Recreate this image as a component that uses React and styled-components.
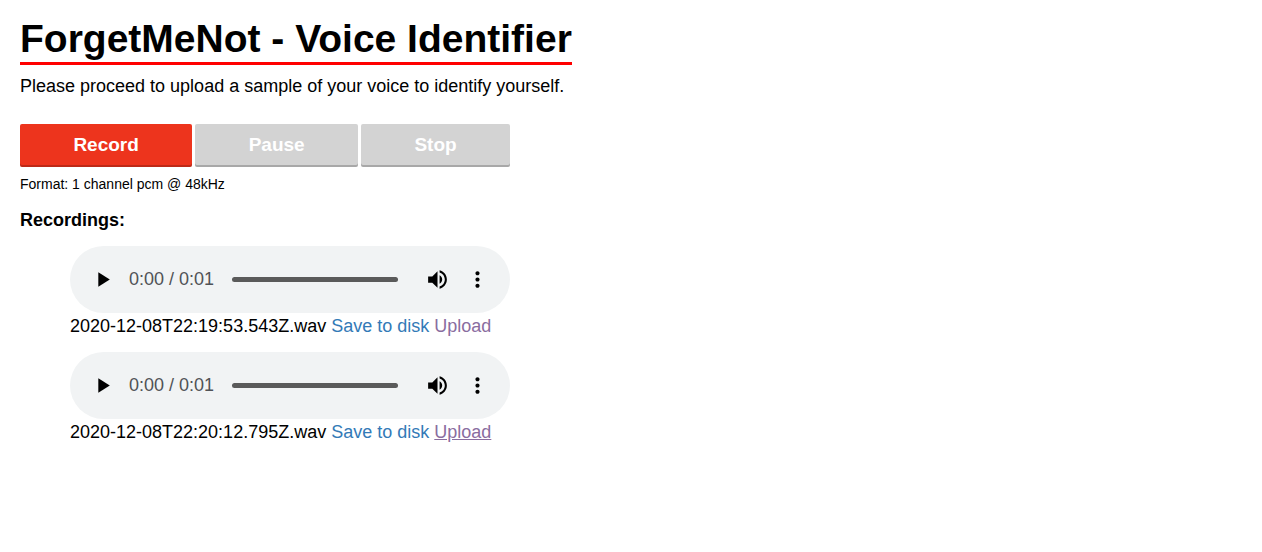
import React from "react";
import styled, { createGlobalStyle } from "styled-components";

const GlobalStyle = createGlobalStyle`
  body {
    margin: 0;
    background: #fff;
    color: #000;
    font-family: "Liberation Sans", Arial, Helvetica, sans-serif;
    font-size: 18px;
    line-height: 26px;
  }
`;

const Page = styled.main`
  display: flex;
  flex-direction: column;
  align-items: flex-start;
  padding: 16px 20px 20px;
`;

const Title = styled.h1`
  margin: 0;
  font-size: 39px;
  line-height: 46px;
  border-bottom: 3px solid #f00;
`;

const Intro = styled.p`
  margin: 8px 0 25px;
`;

const Recorder = styled.section`
  width: 100%;
  max-width: 490px;
`;

const Controls = styled.div`
  display: flex;
  gap: 3px;
`;

const ControlButton = styled.button`
  flex: 1 1 auto;
  height: 43px;
  padding: 0 0 2px;
  border: 0;
  border-radius: 2px;
  background: #ed341d;
  box-shadow: inset 0 -2px 0 rgba(0, 0, 0, 0.2);
  color: #fff;
  font: bold 19px "Liberation Sans", Arial, sans-serif;
  cursor: pointer;

  &:disabled {
    background: #d3d3d3;
    cursor: default;
  }
`;

const Format = styled.p`
  margin: 7px 0 0;
  font-size: 14px;
  line-height: 20px;
`;

const Subheading = styled.h2`
  margin: 13px 0;
  font-size: 18px;
  line-height: 26px;
`;

const RecordingList = styled.ol`
  display: flex;
  flex-direction: column;
  gap: 13px;
  margin: 0;
  padding: 0 0 0 50px;
  list-style: none;
`;

const Player = styled.div`
  display: flex;
  align-items: center;
  height: 67px;
  box-sizing: border-box;
  padding: 0 13px;
  border-radius: 34px;
  background: #f1f3f4;
`;

const IconButton = styled.button`
  display: flex;
  flex: none;
  align-items: center;
  justify-content: center;
  width: 39px;
  height: 41px;
  padding: 0;
  border: 0;
  background: none;
  color: #000;
  cursor: pointer;

  & + & {
    margin-left: 1px;
  }
`;

const Time = styled.span`
  margin: 0 18px 0 7px;
  color: #505256;
  line-height: 25px;
  white-space: nowrap;
`;

const Seek = styled.input`
  appearance: none;
  flex: 1;
  min-width: 0;
  height: 5px;
  margin: 0 20px 0 0;
  border-radius: 3px;
  background: #5a5a5a;

  &::-webkit-slider-thumb {
    appearance: none;
    width: 0;
    height: 0;
  }
`;

const FileLink = styled.a`
  color: ${(p) => (p.$visited ? "#8a6d9f" : "#337ab7")};
  text-decoration: ${(p) => (p.$active ? "underline" : "none")};

  &:hover {
    text-decoration: underline;
  }
`;

const Icon = ({ d }) => (
  <svg width="25" height="25" viewBox="0 0 24 24" fill="currentColor" aria-hidden="true">
    <path d={d} />
  </svg>
);

const PLAY = "M8 5v14l11-7z";
const VOLUME =
  "M3 9v6h4l5 5V4L7 9H3zm13.5 3c0-1.77-1.02-3.29-2.5-4.03v8.05c1.48-.73 2.5-2.25 2.5-4.02zM14 3.23v2.06c2.89.86 5 3.54 5 6.71s-2.11 5.85-5 6.71v2.06c4.01-.91 7-4.49 7-8.77s-2.99-7.86-7-8.77z";
const MORE =
  "M12 8c1.1 0 2-.9 2-2s-.9-2-2-2-2 .9-2 2 .9 2 2 2zm0 2c-1.1 0-2 .9-2 2s.9 2 2 2 2-.9 2-2-.9-2-2-2zm0 6c-1.1 0-2 .9-2 2s.9 2 2 2 2-.9 2-2-.9-2-2-2z";

const recordings = [
  { name: "2020-12-08T22:19:53.543Z.wav", active: false },
  { name: "2020-12-08T22:20:12.795Z.wav", active: true },
];

function Recording({ name, active }) {
  return (
    <li>
      <Player role="group" aria-label={name}>
        <IconButton type="button" aria-label="Play">
          <Icon d={PLAY} />
        </IconButton>
        <Time>0:00 / 0:01</Time>
        <Seek type="range" min="0" max="1" defaultValue="0" aria-label="Seek" />
        <IconButton type="button" aria-label="Mute">
          <Icon d={VOLUME} />
        </IconButton>
        <IconButton type="button" aria-label="More options">
          <Icon d={MORE} />
        </IconButton>
      </Player>
      {name} <FileLink href="#save">Save to disk</FileLink>{" "}
      <FileLink href="#upload" $visited $active={active}>
        Upload
      </FileLink>
    </li>
  );
}

export default function App() {
  return (
    <>
      <GlobalStyle />
      <Page>
        <Title>ForgetMeNot - Voice Identifier</Title>
        <Intro>Please proceed to upload a sample of your voice to identify yourself.</Intro>
        <Recorder>
          <Controls>
            <ControlButton type="button">Record</ControlButton>
            <ControlButton type="button" disabled>
              Pause
            </ControlButton>
            <ControlButton type="button" disabled>
              Stop
            </ControlButton>
          </Controls>
          <Format>Format: 1 channel pcm @ 48kHz</Format>
          <Subheading>Recordings:</Subheading>
          <RecordingList>
            {recordings.map((r) => (
              <Recording key={r.name} {...r} />
            ))}
          </RecordingList>
        </Recorder>
      </Page>
    </>
  );
}
